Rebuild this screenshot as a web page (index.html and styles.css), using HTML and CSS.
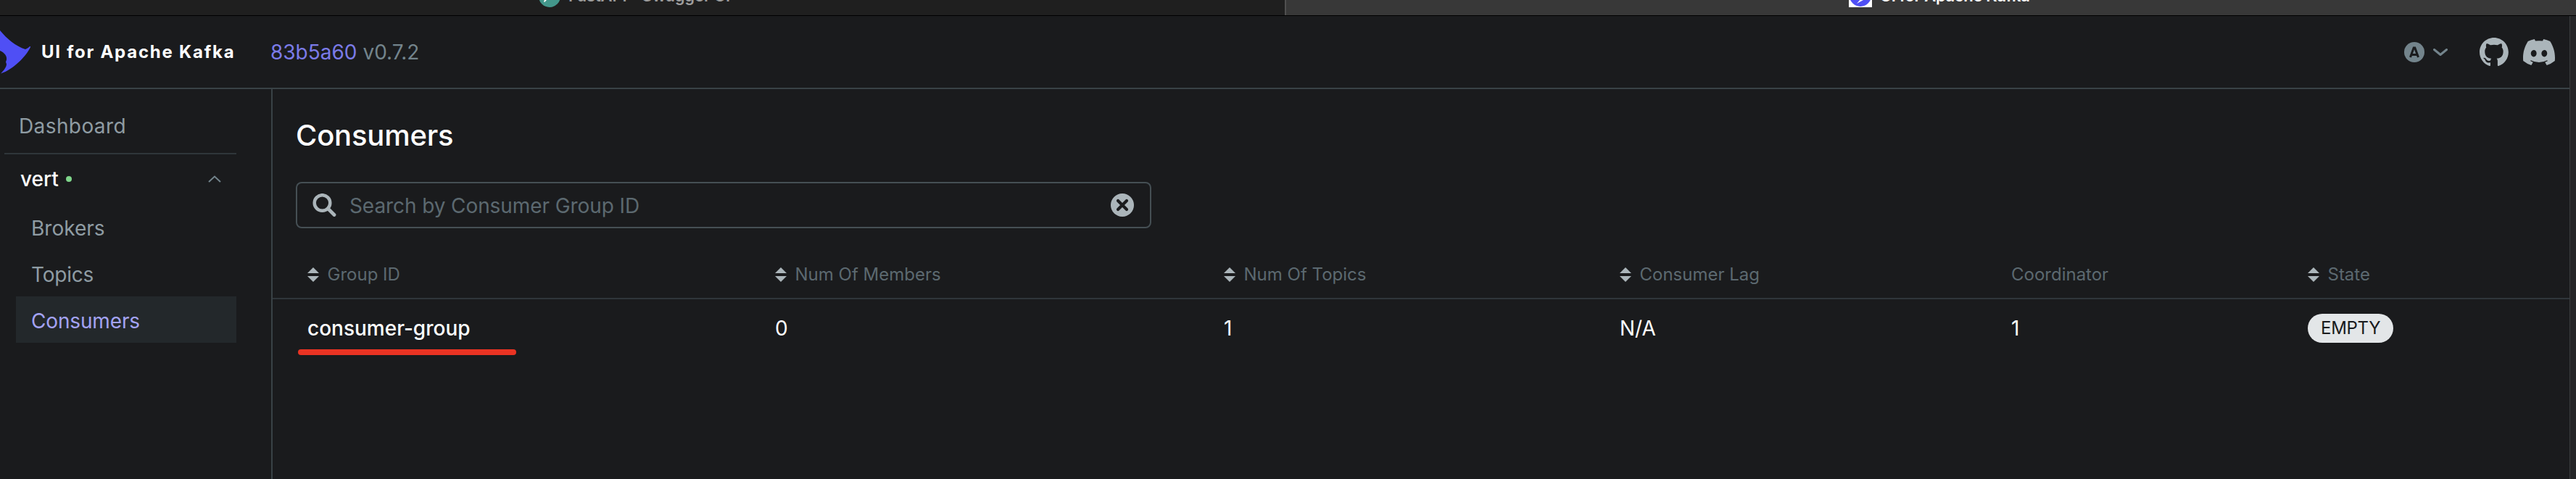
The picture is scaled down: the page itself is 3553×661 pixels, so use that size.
FILE: index.html
```html
<!DOCTYPE html>
<html lang="en">
<head>
<meta charset="utf-8">
<title>UI for Apache Kafka</title>
<link rel="stylesheet" href="styles.css">
</head>
<body>
<div class="tabs">
  <div class="tab">
    <svg class="tab-icon" width="30" height="30" viewBox="0 0 30 30"><circle cx="15" cy="15" r="15" fill="#43978b"/><path d="M16 5 7 22l1 1 12-12h-6z" fill="#fff"/></svg>
    <span class="tab-title">FastAPI - Swagger UI</span>
  </div>
  <div class="tab tab-active">
    <svg class="tab-icon" width="32" height="32" viewBox="0 0 32 32"><path d="M0 0h32v32H0z" fill="#fff"/><circle cx="16" cy="16" r="15" fill="#4f4ff5"/><path d="M22 14 11 27l9-5-2-1 6-5z" fill="#fff"/></svg>
    <span class="tab-title">UI for Apache Kafka</span>
  </div>
</div>
<div class="viewport">
  <div class="app">
    <header class="navbar">
      <svg class="logo" width="43" height="62" viewBox="0 0 43 62"><path d="M0 1C9 12 22 23 35 27c3-1 5-3 6-4 1 0 1 0 1 1C36 37 18 55 1 60.500c4-4 8-9 8-13l-1-3 1-3c1-5-3-10-9-12.500z" fill="#4f4ff5"/></svg>
      <span class="brand">UI for Apache Kafka</span>
      <span class="version"><a class="commit">83b5a60</a> <span>v0.7.2</span></span>
      <div class="tools">
        <svg class="theme" width="28" height="28" viewBox="0 0 28 28"><circle cx="14" cy="14" r="14" fill="#73848c"/><path d="M8.500 21 13.200 8h1.600L19.500 21M10.600 17.500h6.800" fill="none" stroke="#1a1b1d" stroke-width="3"/></svg>
        <svg class="chevron" width="20" height="10" viewBox="0 0 20 10"><path d="m1.500 1.500 8.500 7 8.500-7" fill="none" stroke="#73848c" stroke-width="3" stroke-linecap="round" stroke-linejoin="round"/></svg>
        <svg class="github" width="40" height="39" viewBox="0 0 98 96" preserveAspectRatio="none"><path fill="#abb5ba" fill-rule="evenodd" d="M48.854 0C21.839 0 0 22 0 49.217c0 21.756 13.993 40.172 33.405 46.690 2.427.49 3.316-1.059 3.316-2.362 0-1.141-.08-5.052-.08-9.127-13.590 2.934-16.420-5.867-16.420-5.867-2.184-5.704-5.420-7.170-5.420-7.170-4.448-3.015.324-3.015.324-3.015 4.934.326 7.523 5.052 7.523 5.052 4.367 7.496 11.404 5.378 14.235 4.074.404-3.178 1.699-5.378 3.074-6.600-10.839-1.141-22.243-5.378-22.243-24.283 0-5.378 1.940-9.778 5.014-13.200-.485-1.222-2.184-6.275.486-13.038 0 0 4.125-1.304 13.426 5.052a46.970 46.970 0 0 1 12.214-1.630c4.125 0 8.330.571 12.213 1.630 9.302-6.356 13.427-5.052 13.427-5.052 2.670 6.763.97 11.816.485 13.038 3.155 3.422 5.015 7.822 5.015 13.200 0 18.905-11.404 23.060-22.324 24.283 1.780 1.548 3.316 4.481 3.316 9.126 0 6.600-.08 11.897-.08 13.526 0 1.304.89 2.853 3.316 2.364 19.412-6.520 33.405-24.935 33.405-46.691C97.707 22 75.788 0 48.854 0z"/></svg>
        <svg class="discord" width="44" height="36" viewBox="0 0 127.140 96.360" preserveAspectRatio="none"><path fill="#abb5ba" d="M107.700 8.070A105.150 105.150 0 0 0 81.470 0a72.060 72.060 0 0 0-3.360 6.830 97.680 97.680 0 0 0-29.110 0A72.370 72.370 0 0 0 45.640 0a105.890 105.890 0 0 0-26.250 8.090C2.790 32.650-1.710 56.600.54 80.210a105.730 105.730 0 0 0 32.170 16.150 77.700 77.700 0 0 0 6.890-11.110 68.420 68.420 0 0 1-10.850-5.180c.91-.66 1.800-1.340 2.660-2a75.570 75.570 0 0 0 64.320 0c.87.71 1.760 1.390 2.660 2a68.680 68.680 0 0 1-10.870 5.190 77 77 0 0 0 6.890 11.100 105.250 105.250 0 0 0 32.190-16.140c2.640-27.380-4.510-51.110-18.900-72.150zM42.450 65.690C36.180 65.690 31 60 31 53s5-12.740 11.430-12.740S54 46 53.890 53s-5.050 12.690-11.440 12.690zm42.240 0C78.410 65.690 73.250 60 73.250 53s5-12.740 11.440-12.740S96.230 46 96.120 53s-5.040 12.690-11.430 12.690z"/></svg>
      </div>
    </header>
    <div class="body">
      <nav class="sidebar">
        <a class="nav-top">Dashboard</a>
        <div class="cluster">
          <span class="cluster-name">vert</span><i class="dot"></i>
          <svg class="caret" width="18" height="10" viewBox="0 0 18 10"><path d="m1 9 8-7.500 8 7.500" fill="none" stroke="#73848c" stroke-width="2"/></svg>
        </div>
        <a class="nav-item">Brokers</a>
        <a class="nav-item nav-topics">Topics</a>
        <a class="nav-item nav-current">Consumers</a>
      </nav>
      <main class="main">
        <h1 class="title">Consumers</h1>
        <div class="search">
          <svg width="33" height="32" viewBox="0 0 33 32"><circle cx="13.500" cy="13" r="10.800" fill="none" stroke="#abb5ba" stroke-width="4.500"/><path d="m21.500 21 8.500 8.500" stroke="#abb5ba" stroke-width="4.800" stroke-linecap="round"/></svg>
          <span class="placeholder">Search by Consumer Group ID</span>
          <svg width="32" height="32" viewBox="0 0 32 32"><circle cx="16" cy="16" r="16" fill="#abb5ba"/><path d="m10 10 12 12M22 10 10 22" stroke="#1a1b1d" stroke-width="4.200" stroke-linecap="round"/></svg>
        </div>
        <div class="grid head">
          <div class="th"><svg class="sort" width="16" height="20" viewBox="0 0 16 20"><path d="M8 0l8 8H0zM0 12h16l-8 8z"/></svg>Group ID</div>
          <div class="th"><svg class="sort" width="16" height="20" viewBox="0 0 16 20"><path d="M8 0l8 8H0zM0 12h16l-8 8z"/></svg>Num Of Members</div>
          <div class="th"><svg class="sort" width="16" height="20" viewBox="0 0 16 20"><path d="M8 0l8 8H0zM0 12h16l-8 8z"/></svg>Num Of Topics</div>
          <div class="th"><svg class="sort" width="16" height="20" viewBox="0 0 16 20"><path d="M8 0l8 8H0zM0 12h16l-8 8z"/></svg>Consumer Lag</div>
          <div class="th">Coordinator</div>
          <div class="th"><svg class="sort" width="16" height="20" viewBox="0 0 16 20"><path d="M8 0l8 8H0zM0 12h16l-8 8z"/></svg>State</div>
        </div>
        <div class="grid row">
          <div class="td group">consumer-group<i class="mark"></i></div>
          <div class="td">0</div>
          <div class="td">1</div>
          <div class="td">N/A</div>
          <div class="td">1</div>
          <div class="td"><span class="badge">EMPTY</span></div>
        </div>
      </main>
    </div>
  </div>
  <div class="scrollbar"></div>
</div>
</body>
</html>
```
FILE: styles.css
```css
* { box-sizing: border-box; }
body { margin: 0; width: 3553px; height: 661px; overflow: hidden; display: flex; flex-direction: column; background: #1a1b1d; color: #fff; font: 400 28px/40px Inter, "Liberation Sans", sans-serif; }
svg { display: block; flex: none; }

.tabs { display: flex; flex: none; height: 22px; border-bottom: 1px solid #000; overflow: hidden; }
.tab { display: flex; align-items: flex-end; gap: 11px; width: 1772px; background: #1f1f1f; padding: 0 0 11px 743px; color: #9c9c9c; }
.tab-active { width: 1781px; padding-left: 776px; background: #383838; border-left: 2px solid #4f4f4f; color: #fff; }
.tab-title { margin-bottom: 1px; font-size: 22px; font-weight: 600; line-height: 30px; letter-spacing: -0.1px; white-space: nowrap; }
.tab-active .tab-title { letter-spacing: -0.33px; }

.viewport { display: flex; flex: 1; min-height: 0; }
.app { display: flex; flex-direction: column; width: 3544px; }
.scrollbar { width: 9px; background: #252628; border-left: 1px solid #3a3c3e; }

.navbar { display: flex; align-items: center; flex: none; height: 101px; border-bottom: 2px solid #394246; padding-right: 20px; }
.brand { width: 330px; padding-left: 14px; font-size: 24px; font-weight: 700; letter-spacing: 1.75px; white-space: nowrap; }
.version { color: #73848c; white-space: nowrap; }
.commit { color: #7b7be8; }
.tools { display: flex; align-items: center; margin-left: auto; }
.chevron { margin-left: 12px; }
.github { margin-left: 44px; }
.discord { margin-left: 20px; }

.body { display: flex; flex: 1; min-height: 0; }
.sidebar { width: 376px; border-right: 2px solid #394246; padding: 18px 48px 0 6px; color: #8f9ca3; }
.nav-top { display: flex; align-items: center; height: 72px; padding: 0 20px 5px; border-bottom: 2px solid #2f363a; letter-spacing: 0.4px; }
.cluster { display: flex; align-items: center; height: 68px; padding: 0 21px 0 22px; }
.cluster-name { color: #fff; font-weight: 500; }
.dot { width: 8px; height: 8px; border-radius: 50%; background: #7fd68b; margin-left: 10px; }
.caret { margin-left: auto; }
.nav-item { display: flex; align-items: center; height: 64px; margin-left: 16px; padding: 4px 0 0 21px; }
.nav-topics { letter-spacing: -0.2px; }
.nav-current { background: #23282b; color: #a3a3f5; letter-spacing: -0.15px; }

.main { flex: 1; min-width: 0; }
.title { margin: 0; padding: 32px 0 0 32px; font-size: 40px; line-height: 64px; font-weight: 500; letter-spacing: -0.2px; }
.search { display: flex; align-items: center; width: 1180px; height: 64px; margin: 32px 0 0 32px; padding: 0 22px 0 21px; border: 2px solid #454f54; border-radius: 8px; }
.placeholder { flex: 1; padding: 2px 0 0 18px; color: #5c6970; letter-spacing: -0.09px; }
.grid { display: grid; grid-template-columns: 645px 619px 546px 540px 409px 1fr; padding-left: 48px; align-items: center; }
.head { height: 66px; margin-top: 32px; border-bottom: 2px solid #2f363a; font-size: 24px; color: #5c6970; }
.th { display: flex; align-items: center; gap: 11.5px; }
.sort { fill: #abb5ba; }
.row { height: 80px; }
.td { display: flex; align-items: center; }
.group { position: relative; font-weight: 500; }
.mark { position: absolute; left: -13px; top: 49px; width: 301px; height: 8px; border-radius: 4px; background: #ea3323; }
.badge { display: flex; align-items: center; height: 40px; padding: 0 18px; border-radius: 20px; background: #e3e6e8; color: #1a1b1d; font-size: 24px; letter-spacing: -0.3px; }
```
